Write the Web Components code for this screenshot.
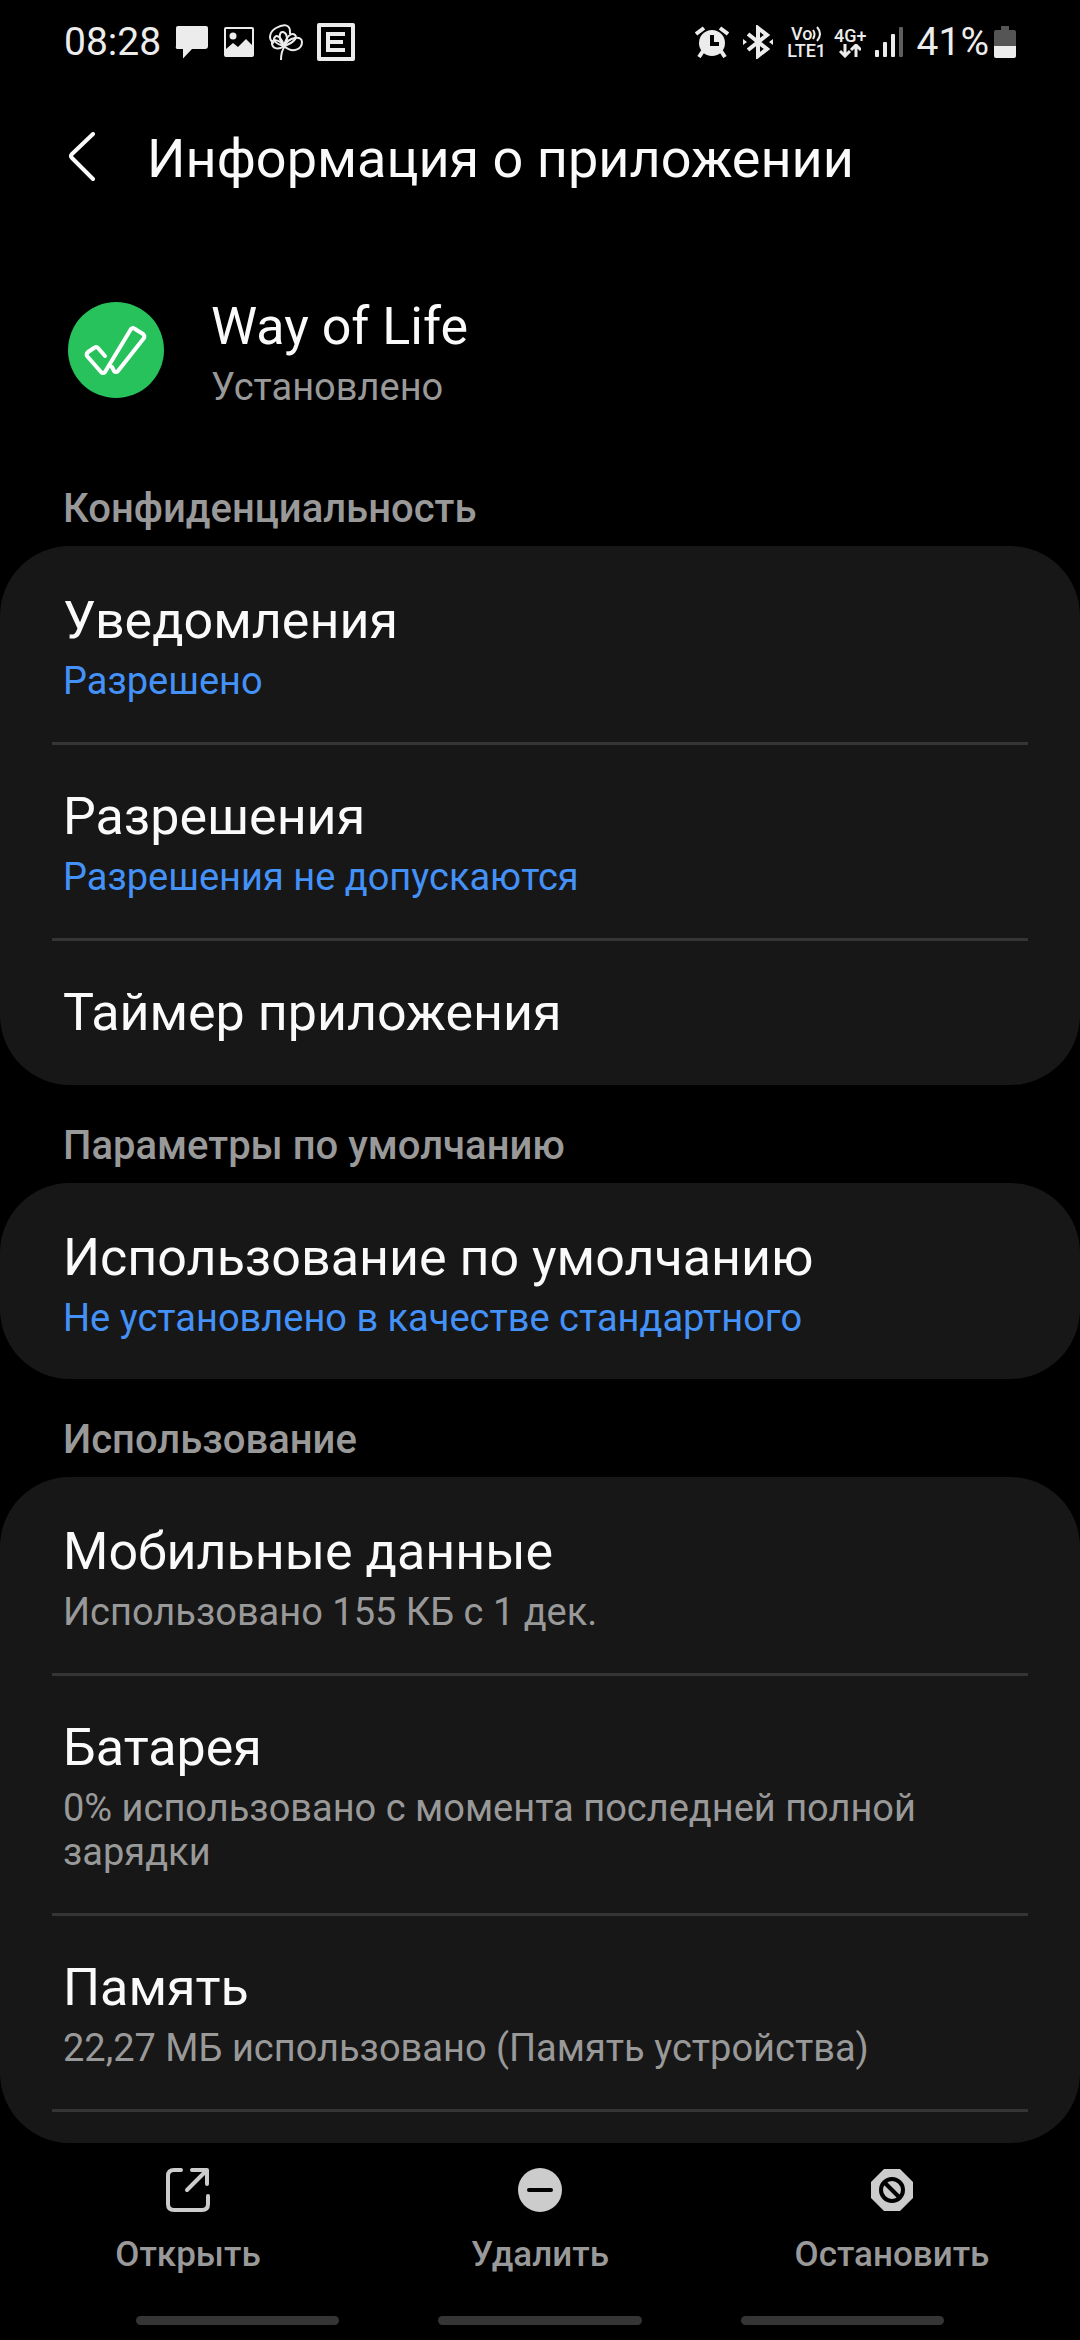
<!DOCTYPE html>
<html lang="ru">
<head>
<meta charset="utf-8">
<meta name="viewport" content="width=device-width, initial-scale=1">
<title>Информация о приложении</title>
<style>
  :root{
    --bg: #000;
    --card: #171717;
    --line: #353535;
    --text: #fafafa;
    --muted: #999;
    --accent: #4492f8;
    --status: #ececec;
  }
  html, body{ margin: 0; background: var(--bg) }
  body{ font-family: Roboto, "Noto Sans", sans-serif; color: var(--text) }
</style>
</head>
<body>
<app-screen>
  <status-bar slot="status" time="08:28" battery="41%"></status-bar>
  <title-bar slot="title">Информация о приложении</title-bar>

  <app-summary>
    Way of Life
    <span slot="state">Установлено</span>
  </app-summary>

  <pref-group heading="Конфиденциальность">
    <pref-row>Уведомления<span slot="note">Разрешено</span></pref-row>
    <pref-row>Разрешения<span slot="note">Разрешения не допускаются</span></pref-row>
    <pref-row>Таймер приложения</pref-row>
  </pref-group>

  <pref-group heading="Параметры по умолчанию">
    <pref-row>Использование по умолчанию<span slot="note">Не установлено в качестве стандартного</span></pref-row>
  </pref-group>

  <pref-group heading="Использование" more>
    <pref-row plain>Мобильные данные<span slot="note">Использовано 155 КБ с 1 дек.</span></pref-row>
    <pref-row plain>Батарея<span slot="note">0% использовано с момента последней полной зарядки</span></pref-row>
    <pref-row plain>Память<span slot="note">22,27 МБ использовано (Память устройства)</span></pref-row>
  </pref-group>

  <action-bar slot="actions">
    <action-button icon="open">Открыть</action-button>
    <action-button icon="remove">Удалить</action-button>
    <action-button icon="stop">Остановить</action-button>
  </action-bar>
  <nav-hints slot="nav"></nav-hints>
</app-screen>

<script>
// page frame: bars on top and bottom, list in between
class AppScreen extends HTMLElement {
  constructor(){
    super();
    const r = this.attachShadow({mode:'open'});
    r.innerHTML = `
      <style>
        :host{ display: flex; flex-direction: column; min-height: 100vh; background: var(--bg) }
        main{ flex: 1 }
      </style>
      <slot name="status"></slot>
      <slot name="title"></slot>
      <main><slot></slot></main>
      <slot name="actions"></slot>
      <slot name="nav"></slot>
    `;
  }
}

class StatusBar extends HTMLElement {
  constructor(){
    super();
    const r = this.attachShadow({mode:'open'});
    r.innerHTML = `
      <style>
        :host{
          display: flex; justify-content: space-between; align-items: center;
          height: 84px; padding: 0 64px; box-sizing: border-box;
          color: var(--status); font-size: 39px; line-height: 46px;
        }
        .side{ display: flex; align-items: center; gap: 14px }
        svg{ display: block; flex: none; fill: currentColor }
        .net{ display: flex; align-items: center; gap: 8px }
        .tiny{ display: grid; justify-items: center; font-size: 18px; line-height: 17px; font-weight: 500 }
        .tiny span{ display: flex; align-items: center }
        .power{ display: flex; align-items: center; gap: 5px }
      </style>
      <div class="side">
        <span class="time"></span>
        <svg width="34" height="36" viewBox="0 0 34 36"><path d="M3 2h28a2 2 0 0 1 2 2v18a3 3 0 0 1-3 3H17l-9 9.500V25H3a2 2 0 0 1-2-3V4a2 2 0 0 1 2-2z"/></svg>
        <svg width="32" height="32" viewBox="0 0 32 32">
          <path fill-rule="evenodd" d="M3 1h26a2 2 0 0 1 2 2v26a2 2 0 0 1-2 2H3a2 2 0 0 1-2-2V3a2 2 0 0 1 2-2zM3 3v20l7-6 5 4 8-8 6 6V3z"/>
          <circle cx="10" cy="10" r="3.500"/>
        </svg>
        <svg width="34" height="38" viewBox="0 0 34 38" style="fill:none" stroke="currentColor" stroke-width="2">
          <path d="M12 37q0-9 4-14"/>
          <path d="M15 23C9 15 2 16 3 21S10 27 15 23"/>
          <path d="M15 23C9 17 10 8 14 9S20 17 15 23"/>
          <path d="M15 23C17 13 23 9 26 12S24 20 15 23"/>
          <path d="M15 23C20 14 33 12 33 19S24 31 15 23"/>
          <path d="M5 20C-1 17 0 9 7 5S22 0 21 11M15 23C7 21 3 17 6 14S13 16 15 23"/>
        </svg>
        <svg width="38" height="38" viewBox="0 0 38 38">
          <path fill-rule="evenodd" d="M2 0h34a2 2 0 0 1 2 2v34a2 2 0 0 1-2 2H2a2 2 0 0 1-2-2V2a2 2 0 0 1 2-2zM4 4v30h30V4z"/>
          <path fill="none" stroke="currentColor" stroke-width="4" d="M28 11H11v16h17M11 19h15"/>
        </svg>
      </div>
      <div class="side">
        <svg width="34" height="32" viewBox="0 0 34 32">
          <circle cx="17" cy="17" r="13"/>
          <path d="M8 25l-4 6M26 25l4 6M1 8l8-6M33 8l-8-6" stroke="currentColor" stroke-width="4"/>
          <path d="M17 9v9h7" fill="none" stroke="#000" stroke-width="4"/>
        </svg>
        <svg width="30" height="34" viewBox="0 0 30 34">
          <path d="M5 9l19 15-9 7V3l9 7L5 25" fill="none" stroke="currentColor" stroke-width="4"/>
          <path d="M0 14l4 3-4 3zM30 14l-4 3 4 3z"/>
        </svg>
        <div class="net">
          <div class="tiny">
            <span>Vo<svg width="10" height="16" viewBox="0 0 10 16" style="fill:none" stroke="currentColor" stroke-width="2"><path d="M1 4q3 4 0 9M5 1q6 7 0 14"/></svg></span>
            <span>LTE1</span>
          </div>
          <div class="tiny">
            <span>4G+</span>
            <svg width="22" height="14" viewBox="0 0 22 14" style="fill:none" stroke="currentColor" stroke-width="3"><path d="M6 0v11M1 7l5 5 5-5M17 13V2M12 6l5-5 5 5"/></svg>
          </div>
          <svg width="28" height="32" viewBox="0 0 28 32">
            <rect x="0" y="24" width="4" height="7" rx="1"/>
            <rect x="8" y="16" width="4" height="15" rx="1"/>
            <rect x="16" y="8" width="4" height="23" rx="1"/>
            <rect x="24" y="1" width="4" height="30" rx="1" opacity=".4"/>
          </svg>
        </div>
        <div class="power">
          <span class="level"></span>
          <svg width="22" height="34" viewBox="0 0 22 34">
            <path d="M7 1h8v4h5a2 2 0 0 1 2 2v14H0V7a2 2 0 0 1 2-2h5z" fill="#555"/>
            <path d="M0 21h22v10a2 2 0 0 1-2 2H2a2 2 0 0 1-2-2z"/>
          </svg>
        </div>
      </div>
    `;
  }

  connectedCallback(){
    const r = this.shadowRoot;
    r.querySelector('.time').textContent = this.getAttribute('time');
    r.querySelector('.level').textContent = this.getAttribute('battery');
  }
}

class TitleBar extends HTMLElement {
  constructor(){
    super();
    const r = this.attachShadow({mode:'open'});
    r.innerHTML = `
      <style>
        :host{ display: flex; align-items: center; gap: 43px; height: 148px; padding: 0 60px }
        button{ padding: 0; border: 0; background: none; color: inherit }
        svg{ display: block }
        h1{ margin: 0; padding-top: 2px; font-size: 54px; line-height: 64px; font-weight: 400 }
      </style>
      <button type="button" aria-label="Назад">
        <svg width="44" height="52" viewBox="0 0 44 52" fill="none" stroke="currentColor" stroke-width="4" stroke-linecap="round" stroke-linejoin="round"><path d="M33 2L12 22q-2 2 0 4l21 21"/></svg>
      </button>
      <h1><slot></slot></h1>
    `;
  }
}

class AppSummary extends HTMLElement {
  constructor(){
    super();
    const r = this.attachShadow({mode:'open'});
    r.innerHTML = `
      <style>
        :host{ display: flex; align-items: flex-start; gap: 47px; padding: 63px 68px 39px }
        svg{ display: block; flex: none; margin-top: 7px }
        .name{ font-size: 52px; line-height: 63px }
        .state{ margin-top: 7px; font-size: 38px; line-height: 44px; color: var(--muted) }
      </style>
      <svg width="96" height="96" viewBox="0 0 96 96">
        <circle cx="48" cy="48" r="48" fill="#27c25c"/>
        <path d="M37 54l-7-8q-2-2-4 0l-6 4q-2 2-1 4l14 16q2 2 4 0L63 27q2-2 4 0l8 5q2 2 1 4L50 69q-2 2-4 0l-2-4" fill="none" stroke="#fff" stroke-width="4" stroke-linecap="round" stroke-linejoin="round"/>
      </svg>
      <div>
        <div class="name"><slot></slot></div>
        <div class="state"><slot name="state"></slot></div>
      </div>
    `;
  }
}

class PrefGroup extends HTMLElement {
  constructor(){
    super();
    const r = this.attachShadow({mode:'open'});
    r.innerHTML = `
      <style>
        :host{ display: block }
        h2{
          margin: 0; padding: 37px 63px 13px;
          font-size: 40px; line-height: 48px; font-weight: 500; color: var(--muted);
        }
        .card{ background: var(--card); border-radius: 70px; overflow: hidden }
        ::slotted(pref-row:not(:first-child)){ --rule: var(--line) }
        .next{ display: none; height: 34px }
        .next::before{ content: ""; display: block; height: 3px; margin: 0 52px; background: var(--line) }
        :host([more]) .next{ display: block }
      </style>
      <h2></h2>
      <div class="card"><slot></slot><div class="next"></div></div>
    `;
  }

  connectedCallback(){
    this.shadowRoot.querySelector('h2').textContent = this.getAttribute('heading');
  }
}

class PrefRow extends HTMLElement {
  constructor(){
    super();
    const r = this.attachShadow({mode:'open'});
    r.innerHTML = `
      <style>
        :host{ display: block }
        .rule{ height: 3px; margin: 0 52px; background: var(--rule, transparent) }
        .body{ min-height: 144px; padding: 40px 63px 39px; box-sizing: border-box }
        .title{ font-size: 52px; line-height: 63px }
        ::slotted([slot=note]){ display: block; margin-top: 7px; font-size: 38px; line-height: 44px; color: var(--accent) }
        :host([plain]) ::slotted([slot=note]){ color: var(--muted) }
      </style>
      <div class="rule"></div>
      <div class="body">
        <div class="title"><slot></slot></div>
        <slot name="note"></slot>
      </div>
    `;
  }
}

class ActionBar extends HTMLElement {
  constructor(){
    super();
    const r = this.attachShadow({mode:'open'});
    r.innerHTML = `
      <style>
        :host{ display: grid; grid-template-columns: repeat(3, 1fr); padding: 24px 12px 0 }
      </style>
      <slot></slot>
    `;
  }
}

const ACTION_ICONS = {
  open: `<g fill="none" stroke="currentColor" stroke-width="4" stroke-linecap="round" stroke-linejoin="round">
      <path d="M16 3H9q-6 0-6 6v28q0 6 6 6h28q6 0 6-6v-8"/><path d="M27 3h15v14M41 4L22 23"/></g>`,
  remove: `<circle cx="23" cy="23" r="22"/><path d="M12 23h22" stroke="#000" stroke-width="4" stroke-linecap="round"/>`,
  stop: `<path d="M15 2h16l13 13v16L31 44H15L2 31V15z"/>
      <g fill="none" stroke="#000" stroke-width="4"><circle cx="23" cy="23" r="11"/><path d="M15 15l16 16"/></g>`,
};

class ActionButton extends HTMLElement {
  constructor(){
    super();
    const r = this.attachShadow({mode:'open'});
    r.innerHTML = `
      <style>
        :host{ display: grid }
        button{
          display: flex; flex-direction: column; align-items: center; gap: 21px;
          padding: 0; border: 0; background: none; color: var(--muted);
          font-family: inherit; font-size: 35px; line-height: 42px; font-weight: 500;
        }
        svg{ display: block; color: #ccc; fill: currentColor }
      </style>
      <button type="button">
        <svg width="46" height="46" viewBox="0 0 46 46" aria-hidden="true"></svg>
        <slot></slot>
      </button>
    `;
  }

  connectedCallback(){
    this.shadowRoot.querySelector('svg').innerHTML = ACTION_ICONS[this.getAttribute('icon')];
  }
}

// gesture hints along the bottom edge
class NavHints extends HTMLElement {
  constructor(){
    super();
    const r = this.attachShadow({mode:'open'});
    r.innerHTML = `
      <style>
        :host{ display: flex; justify-content: space-between; gap: 99px; padding: 40px 136px 15px }
        i{ flex: 1; height: 9px; border-radius: 5px; background: var(--line) }
      </style>
      <i></i><i></i><i></i>
    `;
  }
}

customElements.define('app-screen', AppScreen);
customElements.define('status-bar', StatusBar);
customElements.define('title-bar', TitleBar);
customElements.define('app-summary', AppSummary);
customElements.define('pref-group', PrefGroup);
customElements.define('pref-row', PrefRow);
customElements.define('action-bar', ActionBar);
customElements.define('action-button', ActionButton);
customElements.define('nav-hints', NavHints);
</script>
</body>
</html>
